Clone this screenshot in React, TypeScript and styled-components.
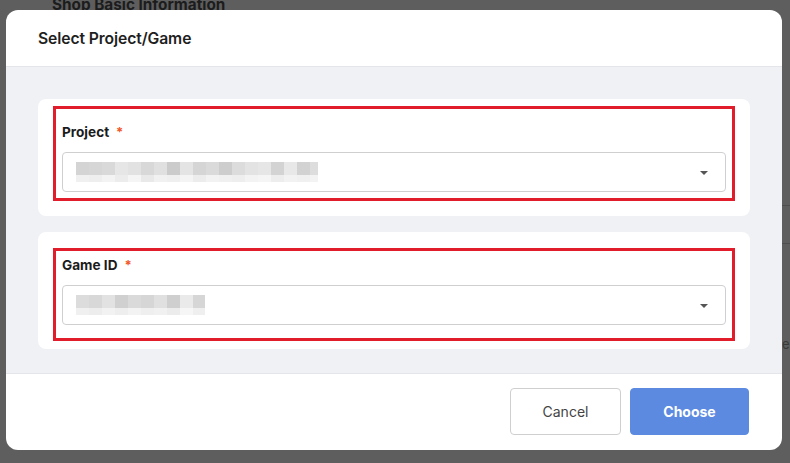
import React from "react";
import styled, { createGlobalStyle } from "styled-components";

const Global = createGlobalStyle`
  html, body { margin: 0; padding: 0; }
  body {
    width: 790px; height: 463px; overflow: hidden;
    background: #5e5e5e;
    font-family: Inter, "Noto Sans", "Liberation Sans", sans-serif;
  }
`;

const Screen = styled.div`
  position: relative;
  width: 790px;
  height: 463px;
  overflow: hidden;
  background: #5e5e5e;
`;

const BackPage = styled.div`
  padding: 0 0 0 52px;
  margin-top: -5px;
`;

const BackTitle = styled.h2`
  margin: 0;
  font-size: 15.3px;
  line-height: 20px;
  font-weight: 700;
  color: #1c1c1c;
`;

const BackLine = styled.div<{ $top: number }>`
  position: absolute;
  left: 782px;
  right: 0;
  top: ${(p) => p.$top}px;
  height: 1px;
  background: #4e4e4e;
`;

const BackLetter = styled.span`
  position: absolute;
  left: 782px;
  top: 336px;
  font-size: 13px;
  color: #3a3a3a;
`;

const Modal = styled.div`
  position: absolute;
  left: 6px;
  top: 10px;
  width: 776px;
  height: 440px;
  background: #fff;
  border-radius: 12px;
  overflow: hidden;
  display: flex;
  flex-direction: column;
`;

const Header = styled.div`
  height: 56px;
  flex: none;
  display: flex;
  align-items: center;
  padding: 0 32px;
  border-bottom: 1px solid #e4e5ea;
`;

const Title = styled.h1`
  margin: 0;
  font-size: 15.7px;
  font-weight: 600;
  color: #1f1f1f;
  letter-spacing: -0.1px;
`;

const Body = styled.div`
  flex: 1;
  background: #f0f1f5;
  padding: 32px 32px 24px;
  display: flex;
  flex-direction: column;
  gap: 16px;
  border-bottom: 1px solid #e4e5ea;
`;

const Card = styled.div`
  position: relative;
  background: #fff;
  border-radius: 8px;
  padding: 23px 24px 24px;
  display: flex;
  flex-direction: column;
  gap: 10px;
`;

const Annotation = styled.div<{ $top: number; $bottom: number }>`
  position: absolute;
  left: 15px;
  right: 15px;
  top: ${(p) => p.$top}px;
  bottom: ${(p) => p.$bottom}px;
  border: 3px solid #e21d2b;
  pointer-events: none;
`;

const Label = styled.label`
  display: flex;
  align-items: center;
  gap: 7px;
  height: 20px;
  font-size: 13.6px;
  font-weight: 700;
  color: #1b1b1b;
`;

const Required = styled.span`
  color: #f0582a;
  font-weight: 700;
  font-size: 13px;
`;

const Select = styled.div`
  height: 40px;
  box-sizing: border-box;
  border: 1px solid #cfcfcf;
  border-radius: 4px;
  background: #fff;
  display: flex;
  align-items: center;
  justify-content: space-between;
  padding: 0 17px 0 13px;
`;

const Mosaic = styled.div<{ $w: number }>`
  display: flex;
  flex-direction: column;
  width: ${(p) => p.$w}px;
  overflow: hidden;
`;

const MosaicRow = styled.div<{ $h: number }>`
  display: flex;
  height: ${(p) => p.$h}px;
`;

const Cell = styled.span`
  flex: none;
  width: 13px;
  height: 100%;
`;

const Caret = styled.span`
  width: 0;
  height: 0;
  border-left: 4px solid transparent;
  border-right: 4px solid transparent;
  border-top: 4px solid #555;
  margin-top: 1px;
`;

const Footer = styled.div`
  flex: none;
  height: 76px;
  box-sizing: border-box;
  display: flex;
  justify-content: flex-end;
  align-items: center;
  gap: 9px;
  padding: 0 33px 1px 0;
`;

const Button = styled.button<{ $primary?: boolean }>`
  height: 47px;
  width: ${(p) => (p.$primary ? 119 : 111)}px;
  border-radius: 4px;
  font-family: Inter, "Noto Sans", "Liberation Sans", sans-serif;
  font-size: 14px;
  font-weight: ${(p) => (p.$primary ? 700 : 400)};
  color: ${(p) => (p.$primary ? "#fff" : "#444")};
  background: ${(p) => (p.$primary ? "#5b8ae0" : "#fff")};
  border: 1px solid ${(p) => (p.$primary ? "#5b8ae0" : "#cfcfcf")};
  cursor: pointer;
`;

const projectTop = [
  "#d4d4d4", "#d6d6d6", "#d9d9d9", "#e6e6e6", "#e2e2e2", "#d8d8d8", "#e0e0e0",
  "#cbcbcb", "#e4e4e4", "#d5d5d5", "#dadada", "#cdcdcd", "#dcdcdc", "#e3e3e3",
  "#e6e6e6", "#d3d3d3", "#e8e8e8", "#d2d2d2", "#dddddd",
];
const projectBottom = [
  "#f0f0f0", "#eeeeee", "#f3f3f3", "#ececec", "#f5f5f5", "#e9e9e9", "#f1f1f1",
  "#efefef", "#f4f4f4", "#ececec", "#f2f2f2", "#f0f0f0", "#eeeeee", "#f3f3f3",
  "#f5f5f5", "#ededed", "#f2f2f2", "#f0f0f0", "#f3f3f3",
];
const gameTop = [
  "#dcdcdc", "#d8d8d8", "#e2e2e2", "#d0d0d0", "#dadada", "#d6d6d6", "#e0e0e0",
  "#cfcfcf", "#eaeaea", "#d6d6d6",
];
const gameBottom = [
  "#f0f0f0", "#ededed", "#f2f2f2", "#eeeeee", "#f3f3f3", "#efefef", "#f1f1f1",
  "#ececec", "#f6f6f6", "#efefef",
];

function Blurred({ top, bottom, width }: { top: string[]; bottom: string[]; width: number }) {
  return (
    <Mosaic aria-hidden $w={width}>
      <MosaicRow $h={13}>
        {top.map((c, i) => (
          <Cell key={i} style={{ background: c }} />
        ))}
      </MosaicRow>
      <MosaicRow $h={7}>
        {bottom.map((c, i) => (
          <Cell key={i} style={{ background: c }} />
        ))}
      </MosaicRow>
    </Mosaic>
  );
}

function Field({
  label,
  top,
  bottom,
  width,
}: {
  label: string;
  top: string[];
  bottom: string[];
  width: number;
}) {
  return (
    <>
      <Label>
        {label}
        <Required>*</Required>
      </Label>
      <Select>
        <Blurred top={top} bottom={bottom} width={width} />
        <Caret />
      </Select>
    </>
  );
}

export default function App() {
  return (
    <Screen>
      <Global />
      <BackPage>
        <BackTitle>Shop Basic Information</BackTitle>
      </BackPage>
      <BackLine $top={205} />
      <BackLine $top={243} />
      <BackLetter>e</BackLetter>
      <Modal>
        <Header>
          <Title>Select Project/Game</Title>
        </Header>
        <Body>
          <Card>
            <Field label="Project" top={projectTop} bottom={projectBottom} width={242} />
            <Annotation $top={7} $bottom={15} />
          </Card>
          <Card>
            <Field label="Game ID" top={gameTop} bottom={gameBottom} width={129} />
            <Annotation $top={16} $bottom={8} />
          </Card>
        </Body>
        <Footer>
          <Button>Cancel</Button>
          <Button $primary>Choose</Button>
        </Footer>
      </Modal>
    </Screen>
  );
}
